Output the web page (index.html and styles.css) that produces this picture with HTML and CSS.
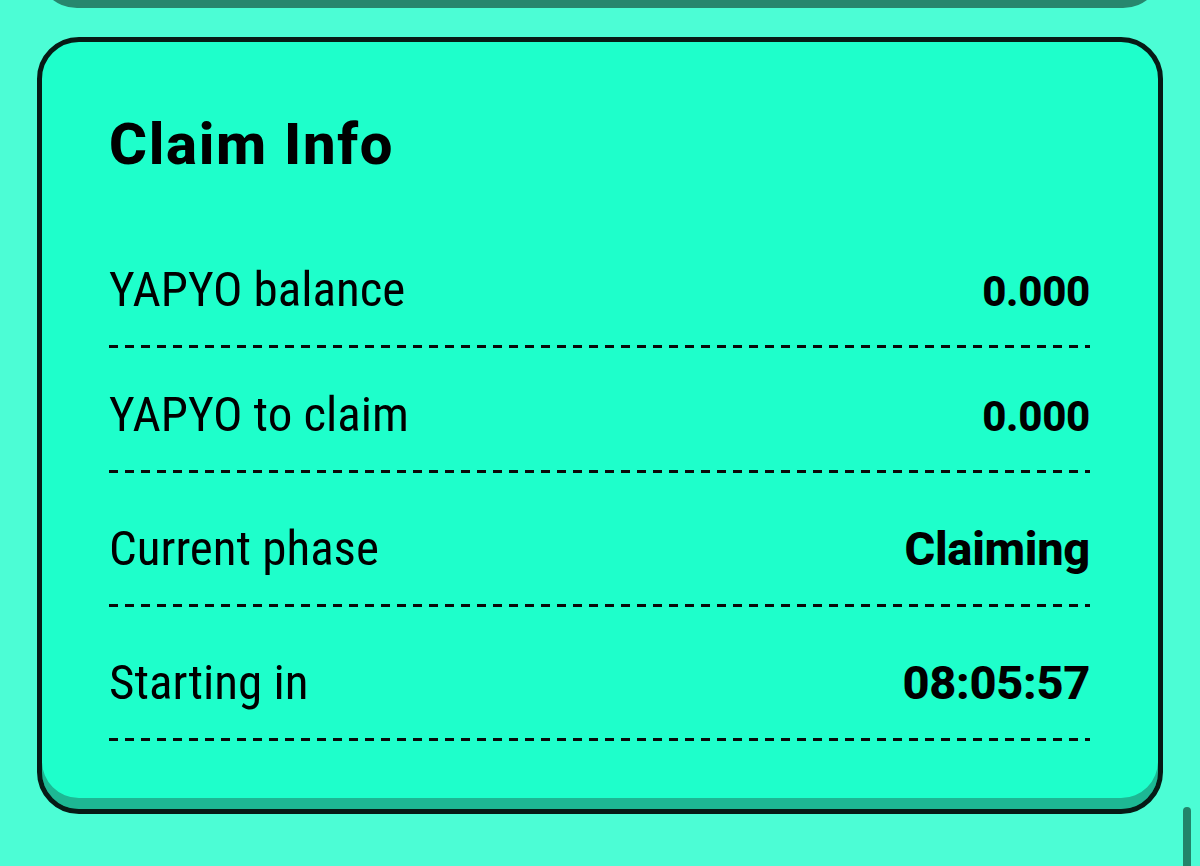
FILE: index.html
```html
<!DOCTYPE html>
<html lang="en">
<head>
<meta charset="utf-8">
<title>Claim Info</title>
<link rel="stylesheet" href="styles.css">
</head>
<body>
  <div class="prev-card"></div>
  <section class="card">
    <h2 class="card-title">Claim Info</h2>
    <div class="row">
      <span class="label">YAPYO balance</span>
      <span class="value value--sm">0.000</span>
    </div>
    <div class="row">
      <span class="label">YAPYO to claim</span>
      <span class="value value--sm">0.000</span>
    </div>
    <div class="row row--spaced">
      <span class="label">Current phase</span>
      <span class="value">Claiming</span>
    </div>
    <div class="row row--spaced">
      <span class="label">Starting in</span>
      <span class="value">08:05:57</span>
    </div>
  </section>
  <div class="scrollbar"></div>
</body>
</html>
```
FILE: styles.css
```css
html, body {
  height: 100%;
}
body {
  margin: 0;
  position: relative;
  overflow: hidden;
  background: #4cfdd5;
  font-family: Roboto, "Liberation Sans", sans-serif;
  color: #000;
}
.prev-card {
  height: 48px;
  margin: -40px 37px 0;
  border-radius: 0 0 40px 40px;
  background: #27876e;
}
.card {
  margin: 29px 37px 0;
  border: 5px solid #061b16;
  border-radius: 42px;
  background: #1effcb;
  box-shadow: inset 0 -11px 0 #1db894;
  padding: 73px 68px 68px 67px;
}
.card-title {
  margin: 0 0 47px;
  font-size: 58px;
  line-height: 1;
  font-weight: 800;
  letter-spacing: 1.7px;
}
.row {
  display: flex;
  justify-content: space-between;
  align-items: baseline;
  padding: 42px 0 34px;
  line-height: 1;
  background: repeating-linear-gradient(90deg, #0a0a0a 0 9px, transparent 9px 16px) left bottom / 100% 3px no-repeat;
}
.row:first-of-type {
  padding-top: 45px;
}
.row--spaced {
  padding-top: 51px;
}
.label {
  font-size: 49px;
  font-weight: 400;
  font-stretch: 80%;
}
.value {
  font-size: 47px;
  font-weight: 800;
  letter-spacing: -0.3px;
}
.value--sm {
  font-size: 42px;
}
.scrollbar {
  position: absolute;
  right: 9px;
  top: 807px;
  bottom: -8px;
  width: 8px;
  border-radius: 4px;
  background: #22846a;
}
```
